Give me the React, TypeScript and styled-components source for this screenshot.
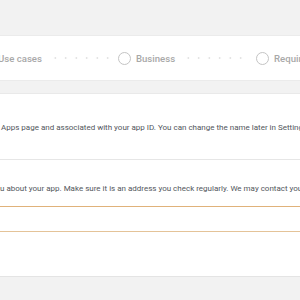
import React from 'react';
import styled, { createGlobalStyle } from 'styled-components';

const GlobalStyle = createGlobalStyle`
  html, body {
    margin: 0;
    padding: 0;
    background: #f2f2f2;
    overflow: hidden;
  }
  body {
    font-family: Roboto, "Liberation Sans", Arial, sans-serif;
    width: 300px;
    height: 300px;
  }
`;

const Page = styled.div`
  display: flex;
  flex-direction: column;
  padding-top: 35px;
`;

const StepperCard = styled.div`
  background: #ffffff;
  border-top: 1px solid #ebebeb;
  border-bottom: 1px solid #ebebeb;
  height: 44px;
  display: flex;
  align-items: center;
  overflow: hidden;
`;

const StepRow = styled.div`
  display: flex;
  align-items: center;
  margin-left: -20px;
  white-space: nowrap;
`;

const Step = styled.div`
  display: flex;
  align-items: center;
  gap: 5px;
  flex-shrink: 0;
`;

const Circle = styled.span`
  width: 11px;
  height: 11px;
  border-radius: 50%;
  border: 1.5px solid #c4c4c4;
  flex-shrink: 0;
`;

const StepLabel = styled.span`
  font-size: 9.6px;
  font-weight: 500;
  color: #a8a8a8;
`;

const Connector = styled.span<{ width: number }>`
  width: ${({ width }) => width}px;
  height: 2px;
  margin: 0 8px;
  flex-shrink: 0;
  background-image: radial-gradient(circle, #dcdcdc 0.9px, transparent 1.1px);
  background-size: 10.5px 2px;
  background-repeat: repeat-x;
`;

const FormCard = styled.div`
  margin-top: 12px;
  background: #ffffff;
  border-top: 1px solid #e9e9e9;
  border-bottom: 1px solid #e4e4e4;
  overflow: hidden;
`;

const Section = styled.div<{ top: number; bottom: number; divider?: boolean }>`
  padding: ${({ top, bottom }) => `${top}px 0 ${bottom}px`};
  border-bottom: ${({ divider }) => (divider ? '1px solid #e6e6e6' : 'none')};
`;

const Help = styled.div<{ shift: number }>`
  font-size: 8px;
  line-height: 12px;
  color: #52565c;
  white-space: nowrap;
  margin-left: ${({ shift }) => shift}px;
`;

const Input = styled.input`
  appearance: none;
  display: block;
  box-sizing: border-box;
  margin: 11px 0 0 -20px;
  padding: 0 6px;
  width: 340px;
  height: 26px;
  border-style: solid;
  border-width: 1.5px;
  border-color: #e0b27a;
  border-bottom-color: #e4c398;
  border-radius: 0;
  background: #ffffff;
  outline: none;
  font-family: inherit;
`;

const steps = [
  { name: 'Use cases', line: 60 },
  { name: 'Business', line: 65 },
  { name: 'Requirements', line: 60 },
];

export default function App() {
  return (
    <>
      <GlobalStyle />
      <Page>
        <StepperCard>
          <StepRow>
            {steps.map((s) => (
              <React.Fragment key={s.name}>
                <Step>
                  <Circle />
                  <StepLabel>{s.name}</StepLabel>
                </Step>
                <Connector width={s.line} />
              </React.Fragment>
            ))}
          </StepRow>
        </StepperCard>
        <FormCard>
          <Section top={28} bottom={25} divider>
            <Help shift={1}>
              Apps page and associated with your app ID. You can change the name later in Settings.
            </Help>
          </Section>
          <Section top={23} bottom={44}>
            <Help shift={0}>
              u about your app. Make sure it is an address you check regularly. We may contact you about important updates.
            </Help>
            <Input type="email" />
          </Section>
        </FormCard>
      </Page>
    </>
  );
}
